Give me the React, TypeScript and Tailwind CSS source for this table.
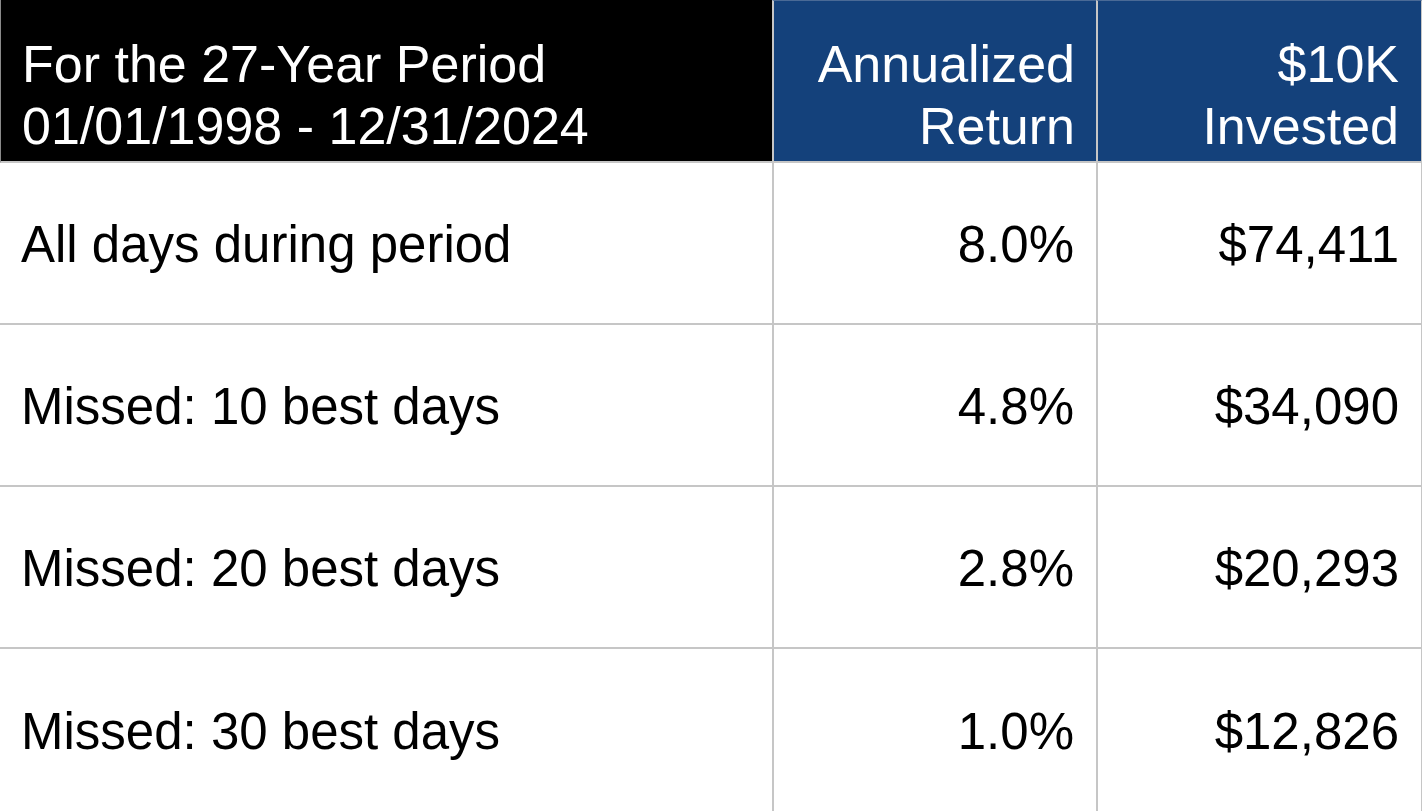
const rows = [
  { label: "All days during period", ret: "8.0%", value: "$74,411" },
  { label: "Missed: 10 best days", ret: "4.8%", value: "$34,090" },
  { label: "Missed: 20 best days", ret: "2.8%", value: "$20,293" },
  { label: "Missed: 30 best days", ret: "1.0%", value: "$12,826" },
];

export default function App() {
  return (
    <div
      className="w-[1422px] h-[811px] overflow-hidden bg-white text-black"
      style={{ fontFamily: '"Liberation Sans", Arial, sans-serif' }}
    >
      <div className="grid grid-cols-[772px_324px_326px] grid-rows-[163px_162px_162px_162px_162px]">
        <div className="bg-black border-l border-[#8a8a8a] border-b-2 border-b-[#c6c6c6] text-white text-[52px] leading-[62px] pl-[21px] flex flex-col justify-center pt-[28px]">
          <span>For the 27-Year Period</span>
          <span>01/01/1998 - 12/31/2024</span>
        </div>
        <div className="bg-[#14417b] border-l-2 border-l-[#c6c6c6] border-b-2 border-b-[#c6c6c6] border-t border-t-[#4a6a96] text-white text-[52px] leading-[62px] pr-[21px] flex flex-col justify-center items-end pt-[28px]">
          <span>Annualized</span>
          <span>Return</span>
        </div>
        <div className="bg-[#14417b] border-l-2 border-l-[#c6c6c6] border-b-2 border-b-[#c6c6c6] border-t border-t-[#4a6a96] border-r border-r-[#c6c6c6] text-white text-[52px] leading-[62px] pr-[22px] flex flex-col justify-center items-end pt-[28px]">
          <span>$10K</span>
          <span>Invested</span>
        </div>
        {rows.map((r, i) => (
          <div key={r.label} className="contents">
            <div
              className={`flex items-center pl-[21px] pt-[4px] text-[51px] ${i < rows.length - 1 ? "border-b-2 border-b-[#c6c6c6]" : ""}`}
            >
              {r.label}
            </div>
            <div
              className={`flex items-center justify-end pr-[22px] pt-[4px] text-[51px] border-l-2 border-l-[#c6c6c6] ${i < rows.length - 1 ? "border-b-2 border-b-[#c6c6c6]" : ""}`}
            >
              {r.ret}
            </div>
            <div
              className={`flex items-center justify-end pr-[22px] pt-[4px] text-[51px] border-l-2 border-l-[#c6c6c6] border-r border-r-[#c6c6c6] ${i < rows.length - 1 ? "border-b-2 border-b-[#c6c6c6]" : ""}`}
            >
              {r.value}
            </div>
          </div>
        ))}
      </div>
    </div>
  );
}
